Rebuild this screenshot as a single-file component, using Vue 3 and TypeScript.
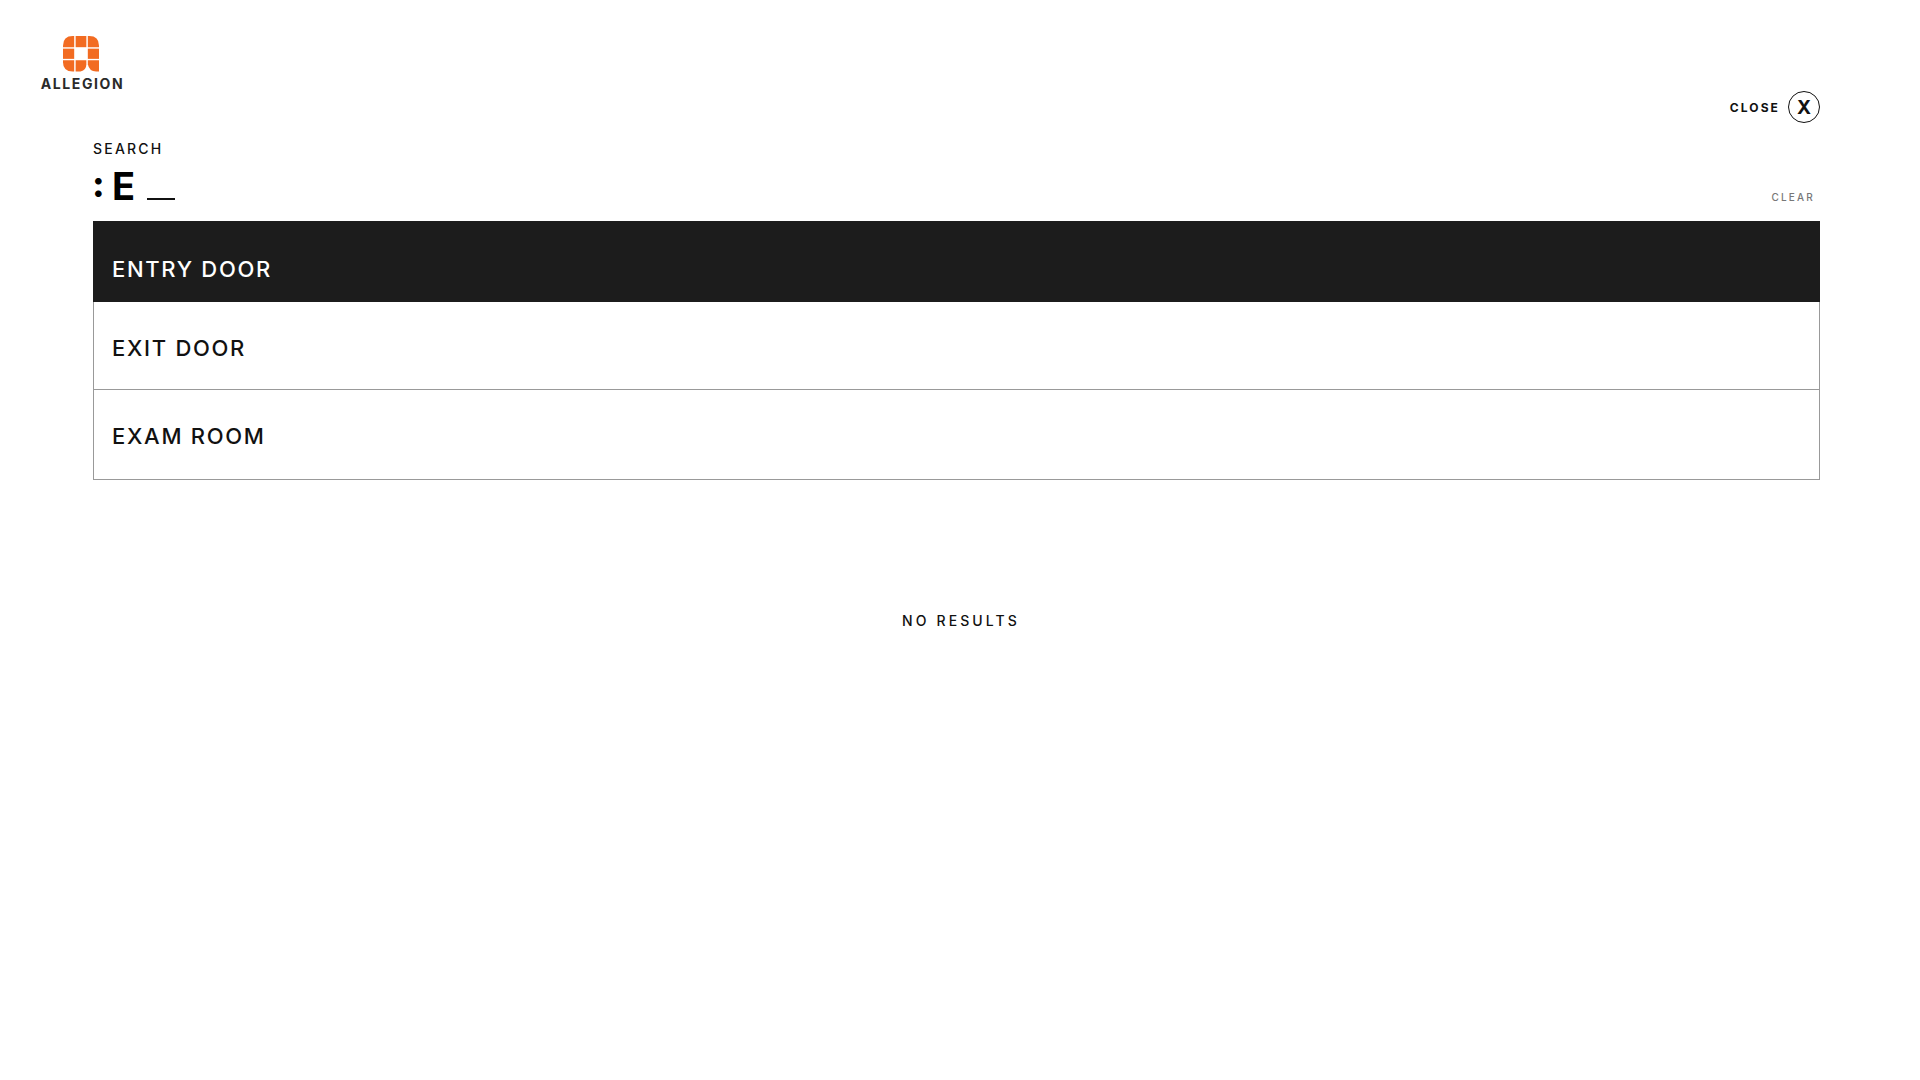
<script setup lang="ts">
/**
 * Search overlay with type-ahead suggestions.
 */
import { ref } from 'vue'

const query = ref('E')
const suggestions = ['ENTRY DOOR', 'EXIT DOOR', 'EXAM ROOM']
const activeIndex = ref(0)
</script>

<template>
  <div class="page">
    <header class="top">
      <div class="logo">
        <svg class="logo-mark" width="36" height="36" viewBox="0 0 37 37">
          <g fill="#f26b21">
            <path d="M0 11.5V10Q0 0 10 0h1.5v11.5z" />
            <rect x="13" y="0" width="11" height="11.5" />
            <path d="M25.500 0H27Q37 0 37 10v1.500H25.500z" />
            <rect x="0" y="13" width="11.500" height="10.500" />
            <rect x="25.500" y="13" width="11.500" height="10.500" />
            <path d="M0 25h11.500v11.500H10Q0 36.500 0 27z" />
            <path d="M13 25h11v4Q24 35 18 36.500h-5z" />
            <path d="M25.500 25H37v11.500h-3Q27 36.500 25.500 29z" />
          </g>
        </svg>
        <span class="logo-text">ALLEGION</span>
      </div>
      <button class="close-btn">
        <span>CLOSE</span>
        <span class="close-icon">X</span>
      </button>
    </header>

    <main class="search">
      <div class="search-label">SEARCH</div>
      <div class="search-row">
        <div class="search-input">
          <span class="colon">:</span>
          <span class="typed">{{ query }}</span>
          <span class="cursor"></span>
        </div>
        <button class="clear-btn">CLEAR</button>
      </div>

      <ul class="results">
        <li
          v-for="(item, i) in suggestions"
          :key="item"
          class="result"
          :class="{ active: i === activeIndex }"
        >
          {{ item }}
        </li>
      </ul>

      <p class="no-results">NO RESULTS</p>
    </main>
  </div>
</template>

<style scoped>
.page {
  min-height: 1080px;
  box-sizing: border-box;
  padding: 36px 100px 0 41px;
  background: #fff;
  color: #111;
  font-family: Inter, "Liberation Sans", sans-serif;
}

.top {
  display: flex;
  justify-content: space-between;
  align-items: flex-end;
  height: 87px;
}

.logo {
  display: flex;
  flex-direction: column;
  align-items: center;
  width: 83px;
  align-self: flex-start;
}

.logo-mark {
  display: block;
  margin-right: 3px;
}

.logo-text {
  margin-top: 3px;
  font-size: 14px;
  line-height: 17px;
  font-weight: 700;
  letter-spacing: 1.6px;
  white-space: nowrap;
  color: #2a2a2a;
}

.close-btn {
  display: flex;
  align-items: center;
  gap: 8px;
  padding: 0;
  border: none;
  background: none;
  color: #111;
  font-family: inherit;
  font-size: 12px;
  font-weight: 700;
  letter-spacing: 2.1px;
}

.close-icon {
  display: flex;
  align-items: center;
  justify-content: center;
  width: 30px;
  height: 30px;
  border: 1.5px solid #111;
  border-radius: 50%;
  font-size: 19px;
  font-weight: 700;
  letter-spacing: 0;
}

.search {
  margin-left: 52px;
}

.search-label {
  margin-top: 17px;
  font-size: 14px;
  line-height: 18px;
  font-weight: 500;
  letter-spacing: 2.2px;
}

.search-row {
  display: flex;
  justify-content: space-between;
  align-items: flex-end;
  height: 63px;
  padding-right: 5px;
  padding-bottom: 14px;
  box-sizing: border-box;
}

.search-input {
  display: flex;
  align-items: baseline;
  height: 41px;
  font-size: 38px;
  line-height: 41px;
  font-weight: 700;
  color: #000;
}

.colon {
  width: 20px;
  margin-left: -1px;
  margin-right: 1px;
  font-size: 36px;
  font-weight: 800;
  transform: translateY(-3px);
}

.typed {
  width: 34px;
  margin-left: -1px;
  margin-right: 1px;
}

.cursor {
  width: 28px;
  height: 2px;
  background: #111;
}

.clear-btn {
  margin-bottom: 4px;
  padding: 0;
  border: none;
  background: none;
  color: #777;
  font-family: inherit;
  font-size: 10px;
  line-height: 12px;
  font-weight: 500;
  letter-spacing: 2.2px;
}

.results {
  margin: 0;
  padding: 0;
  list-style: none;
  border: 1px solid #999;
  border-top: none;
}

.result {
  display: flex;
  align-items: center;
  height: 88px;
  box-sizing: border-box;
  padding: 4px 0 0 18px;
  border-bottom: 1px solid #999;
  font-size: 22px;
  font-weight: 500;
  letter-spacing: 1.7px;
}

.result:last-child {
  height: 89px;
  padding-top: 3px;
  border-bottom: none;
}

.result.active {
  height: 81px;
  margin: 0 -1px;
  padding: 14px 0 0 19px;
  border-bottom: none;
  background: #1c1c1c;
  color: #fff;
}

.no-results {
  margin: 132px 0 0;
  padding-left: 9px;
  text-align: center;
  font-size: 14px;
  line-height: 18px;
  font-weight: 500;
  letter-spacing: 3.1px;
}
</style>

<style>
html,
body {
  margin: 0;
  background: #fff;
}
</style>
